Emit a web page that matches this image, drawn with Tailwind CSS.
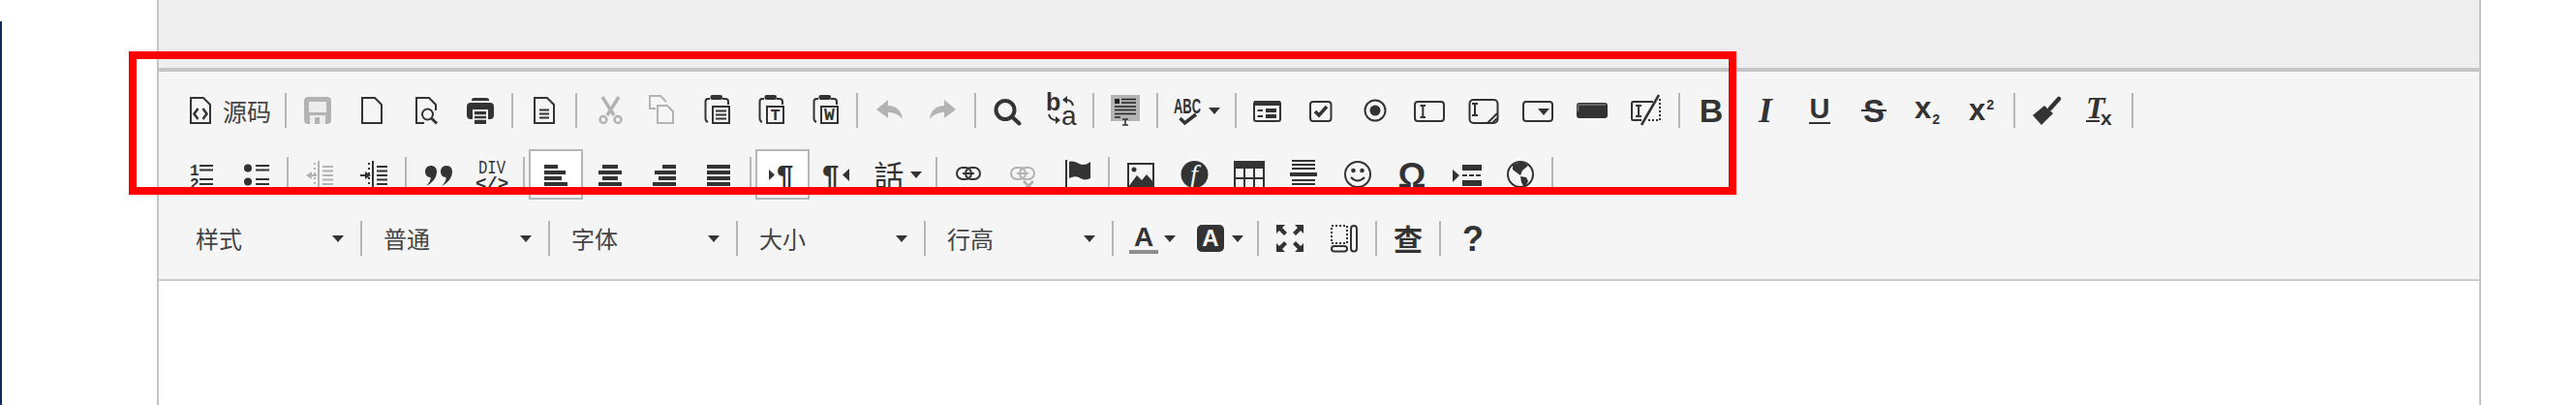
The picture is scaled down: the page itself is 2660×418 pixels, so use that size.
<!DOCTYPE html>
<html lang="zh">
<head>
<meta charset="utf-8">
<title>Editor toolbar</title>
<script src="https://cdn.jsdelivr.net/npm/@tailwindcss/browser@4"></script>
</head>
<body class="bg-white">
<div class="relative w-[2660px] h-[418px] overflow-hidden bg-white font-['Noto_Sans_CJK_SC','Noto_Sans',sans-serif] text-[24px] text-[#444]">
  <div class="absolute left-0 top-[22px] bottom-0 w-[2px] bg-[#0f2a5c]"></div>

  <div class="ml-[162px] w-[2400px] h-[418px] border-x-2 border-[#c4c4c4]">
    <div class="h-[74px] bg-[#eeeeee] border-b-4 border-[#c4c4c4]"></div>
    <div class="h-[216px] bg-[#f5f5f5] border-b-2 border-[#cccccc] pt-[7px]">

      <!-- ROW 1 -->
      <div class="flex items-center h-[66px] pl-[15px]">
        <div class="w-[111px] flex items-center pl-[14px]">
          <svg class="overflow-visible shrink-0" width="28" height="28" viewBox="0 0 28 28"><path d="M4 1H17L24 8V27H4Z" fill="none" stroke="#333" stroke-width="2"/><path d="M11.5 12L7.5 17.5L11.5 23M16.5 12L20.5 17.5L16.5 23" fill="none" stroke="#333" stroke-width="2.5"/></svg>
          <span class="ml-[9px] leading-none text-[25px]">源码</span>
        </div>
        <div class="w-[2px] h-[36px] mx-[4px] bg-[#b6b6b6]"></div>
        <!-- save -->
        <div class="w-[56px] flex justify-center"><svg class="overflow-visible" width="28" height="28" viewBox="0 0 28 28"><rect width="28" height="28" rx="4" fill="#b3b3b3"/><rect x="5" y="5" width="18" height="11" fill="#ededed"/><rect x="6" y="19" width="16" height="9" fill="#ededed"/><rect x="11" y="21" width="5" height="7" fill="#b3b3b3"/></svg></div>
        <!-- new -->
        <div class="w-[56px] flex justify-center"><svg class="overflow-visible" width="28" height="28" viewBox="0 0 28 28"><path d="M4 1H17L24 8V27H4Z" fill="none" stroke="#333" stroke-width="2"/></svg></div>
        <!-- preview -->
        <div class="w-[56px] flex justify-center"><svg class="overflow-visible" width="28" height="28" viewBox="0 0 28 28"><path d="M12 27H4V1H17L24 8V14" fill="none" stroke="#333" stroke-width="2"/><circle cx="15.5" cy="18" r="5.5" fill="none" stroke="#333" stroke-width="2"/><path d="M19.5 22L25 27.5" stroke="#333" stroke-width="3"/></svg></div>
        <!-- print -->
        <div class="w-[56px] flex justify-center"><svg class="overflow-visible" width="28" height="28" viewBox="0 0 28 28"><path d="M5 4V3Q5 1 8 1H20Q23 1 23 3V4Z" fill="#333"/><rect y="6" width="28" height="17" rx="4" fill="#333"/><rect x="6" y="13" width="16" height="15" fill="#f5f5f5"/><rect x="8" y="15" width="12" height="13" fill="#333"/><path d="M8 19H20M8 23H20" stroke="#f5f5f5" stroke-width="1.5"/></svg></div>
        <div class="w-[2px] h-[36px] mx-[4px] bg-[#b6b6b6]"></div>
        <!-- templates -->
        <div class="w-[56px] flex justify-center"><svg class="overflow-visible" width="28" height="28" viewBox="0 0 28 28"><path d="M4 1H17L24 8V27H4Z" fill="none" stroke="#333" stroke-width="2"/><path d="M9 13.5H19M9 17.5H19M9 21.5H19" stroke="#333" stroke-width="2"/></svg></div>
        <div class="w-[2px] h-[36px] mx-[4px] bg-[#b6b6b6]"></div>
        <!-- cut -->
        <div class="w-[56px] flex justify-center"><svg class="overflow-visible" width="28" height="28" viewBox="0 0 28 28"><path d="M8 0L20 19M25 0L13 19" stroke="#b3b3b3" stroke-width="3.5" fill="none"/><circle cx="9" cy="23.5" r="3.5" fill="none" stroke="#b3b3b3" stroke-width="2.5"/><circle cx="24" cy="23.5" r="3.5" fill="none" stroke="#b3b3b3" stroke-width="2.5"/></svg></div>
        <!-- copy -->
        <div class="w-[56px] flex justify-center"><svg class="overflow-visible" width="28" height="28" viewBox="0 0 28 28"><path d="M7 12H1V-1H12L18 5" fill="none" stroke="#b3b3b3" stroke-width="2"/><path d="M9 9H19L25 15V27H9Z" fill="none" stroke="#b3b3b3" stroke-width="2"/></svg></div>
        <!-- paste -->
        <div class="w-[56px] flex justify-center"><svg class="overflow-visible" width="28" height="28" viewBox="0 0 28 28"><g transform="translate(1 0)"><rect x="6.5" y="-2" width="12.5" height="5" rx="2" fill="#333"/><path d="M6 2H4Q1.5 2 1.5 5V22Q1.5 25 4 26M19 2H22Q25 2 25 5V8" fill="none" stroke="#333" stroke-width="2"/><rect x="9" y="10" width="17" height="17" fill="none" stroke="#333" stroke-width="2"/><path d="M12 14.5H23M12 18.5H23M12 22.5H23" stroke="#333" stroke-width="2"/></g></svg></div>
        <!-- paste text -->
        <div class="w-[56px] flex justify-center"><svg class="overflow-visible" width="28" height="28" viewBox="0 0 28 28"><g transform="translate(1 0)"><rect x="6.5" y="-2" width="12.5" height="5" rx="2" fill="#333"/><path d="M6 2H4Q1.5 2 1.5 5V22Q1.5 25 4 26M19 2H22Q25 2 25 5V8" fill="none" stroke="#333" stroke-width="2"/><rect x="9" y="10" width="17" height="17" fill="none" stroke="#333" stroke-width="2"/><text x="17.5" y="24" text-anchor="middle" font-family="Liberation Mono" font-weight="bold" font-size="17" fill="#333">T</text></g></svg></div>
        <!-- paste word -->
        <div class="w-[56px] flex justify-center"><svg class="overflow-visible" width="28" height="28" viewBox="0 0 28 28"><g transform="translate(1 0)"><rect x="6.5" y="-2" width="12.5" height="5" rx="2" fill="#333"/><path d="M6 2H4Q1.5 2 1.5 5V22Q1.5 25 4 26M19 2H22Q25 2 25 5V8" fill="none" stroke="#333" stroke-width="2"/><rect x="9" y="10" width="17" height="17" fill="none" stroke="#333" stroke-width="2"/><text x="17.5" y="24" text-anchor="middle" font-family="Liberation Mono" font-weight="bold" font-size="18" fill="#333">W</text></g></svg></div>
        <div class="w-[2px] h-[36px] mx-[4px] bg-[#b6b6b6]"></div>
        <!-- undo / redo -->
        <div class="w-[56px] flex justify-center"><svg class="overflow-visible" width="28" height="28" viewBox="0 0 28 28"><path d="M1 13L13 3V9C21 9 27 14 28 23C24 18 19 16 13 16V22Z" fill="#b3b3b3"/></svg></div>
        <div class="w-[56px] flex justify-center"><svg class="overflow-visible" width="28" height="28" viewBox="0 0 28 28"><path d="M27 13L15 3V9C7 9 1 14 0 23C4 18 9 16 15 16V22Z" fill="#b3b3b3"/></svg></div>
        <div class="w-[2px] h-[36px] mx-[4px] bg-[#b6b6b6]"></div>
        <!-- find -->
        <div class="w-[56px] flex justify-center"><svg class="overflow-visible" width="28" height="28" viewBox="0 0 28 28"><circle cx="12" cy="13.5" r="9.5" fill="none" stroke="#333" stroke-width="4"/><path d="M19.5 21L26.5 27.5" stroke="#333" stroke-width="4" stroke-linecap="round"/></svg></div>
        <!-- replace -->
        <div class="w-[56px] flex justify-center"><svg class="overflow-visible" width="28" height="28" viewBox="0 0 28 28"><text x="-2" y="14" font-family="Liberation Sans" font-size="25" fill="#333" font-weight="bold">b</text><text x="14" y="29" font-family="Liberation Sans" font-size="28" fill="#333">a</text><path d="M26 9C25 4 22 3 18 3" fill="none" stroke="#333" stroke-width="2"/><path d="M15 3L20 -1V7Z" fill="#333"/><path d="M1 18C2 22 5 24 9 24" fill="none" stroke="#333" stroke-width="2"/><path d="M13 24L8 20V28Z" fill="#333"/></svg></div>
        <div class="w-[2px] h-[36px] mx-[4px] bg-[#b6b6b6]"></div>
        <!-- select all -->
        <div class="w-[56px] flex justify-center"><svg class="overflow-visible" width="28" height="28" viewBox="0 0 28 28"><rect x="-1" y="-2" width="30" height="27" fill="#b3b3b3"/><rect x="3" y="2" width="5" height="5" fill="#222"/><path d="M10 2.5H25M10 6H25M3 10H25M3 13.5H25M3 17.5H25M3 21H9" stroke="#222" stroke-width="1.6"/><path d="M11 23H17M14 23V29M11 29H17" stroke="#333" stroke-width="1.6" fill="none"/></svg></div>
        <div class="w-[2px] h-[36px] mx-[4px] bg-[#b6b6b6]"></div>
        <!-- spell -->
        <div class="w-[71px] flex items-center pl-[12px]"><svg class="overflow-visible shrink-0" width="28" height="28" viewBox="0 0 28 28"><text x="0" y="17" font-family="Liberation Sans" font-weight="bold" font-size="22" textLength="28" lengthAdjust="spacingAndGlyphs" fill="#333">ABC</text><path d="M6.5 22L11.5 27L23 18" fill="none" stroke="#333" stroke-width="3.5"/></svg><svg class="ml-[8px] shrink-0" width="12" height="7" viewBox="0 0 12 7"><path d="M0 0H12L6 7Z" fill="#333"/></svg></div>
        <div class="w-[2px] h-[36px] mx-[4px] bg-[#b6b6b6]"></div>
        <!-- form -->
        <div class="w-[56px] flex justify-center"><svg class="overflow-visible" width="28" height="28" viewBox="0 0 28 28"><rect x="0" y="5" width="27" height="20" rx="2" fill="none" stroke="#333" stroke-width="2"/><rect x="0" y="4" width="27" height="5" fill="#333"/><path d="M3.5 14H9M3.5 20H9" stroke="#333" stroke-width="2"/><rect x="12" y="12" width="11" height="4" fill="#333"/><rect x="12" y="18" width="11" height="4" fill="#333"/></svg></div>
        <!-- checkbox -->
        <div class="w-[56px] flex justify-center"><svg class="overflow-visible" width="28" height="28" viewBox="0 0 28 28"><rect x="2" y="5" width="21.5" height="20" rx="3" fill="none" stroke="#333" stroke-width="2"/><path d="M7 15L11 19L19 10" fill="none" stroke="#333" stroke-width="3.5"/></svg></div>
        <!-- radio -->
        <div class="w-[56px] flex justify-center"><svg class="overflow-visible" width="28" height="28" viewBox="0 0 28 28"><circle cx="13" cy="14" r="10.5" fill="none" stroke="#333" stroke-width="2"/><circle cx="13" cy="14" r="5.5" fill="#333"/></svg></div>
        <!-- text field -->
        <div class="w-[56px] flex justify-center"><svg class="overflow-visible" width="28" height="28" viewBox="0 0 28 28"><rect x="-2" y="5" width="30" height="20" rx="3" fill="none" stroke="#333" stroke-width="2"/><path d="M3.5 9H9M6.3 9V21M3.5 21H9" fill="none" stroke="#333" stroke-width="2"/></svg></div>
        <!-- textarea -->
        <div class="w-[56px] flex justify-center"><svg class="overflow-visible" width="28" height="28" viewBox="0 0 28 28"><rect x="-1.5" y="3" width="29" height="24" rx="4" fill="none" stroke="#333" stroke-width="2"/><path d="M1 7H7M4 7V19M1 19H7" fill="none" stroke="#333" stroke-width="2"/><path d="M17 27L27 17M22 27L27 22" stroke="#333" stroke-width="2"/></svg></div>
        <!-- select -->
        <div class="w-[56px] flex justify-center"><svg class="overflow-visible" width="28" height="28" viewBox="0 0 28 28"><rect x="-2" y="5" width="30" height="20" rx="3" fill="none" stroke="#333" stroke-width="2"/><path d="M13 12H25L19 19Z" fill="#333"/></svg></div>
        <!-- button -->
        <div class="w-[56px] flex justify-center"><svg class="overflow-visible" width="28" height="28" viewBox="0 0 28 28"><rect x="-3" y="6" width="32" height="16" rx="3" fill="#333"/><path d="M-1.5 15V9.5Q-1.5 8 0 8H27" fill="none" stroke="#777" stroke-width="1.5"/></svg></div>
        <!-- hidden -->
        <div class="w-[56px] flex justify-center"><svg class="overflow-visible" width="28" height="28" viewBox="0 0 28 28"><path d="M20 5H-1Q-2 5 -2 7V22Q-2 24 -1 24H8" fill="none" stroke="#333" stroke-width="2"/><path d="M15 24H27V2" fill="none" stroke="#333" stroke-width="2" stroke-dasharray="2 2"/><path d="M26 -2L8 29" stroke="#333" stroke-width="2.5"/><path d="M2 9H8M5 9V20M2 20H8" fill="none" stroke="#333" stroke-width="2"/></svg></div>
        <div class="w-[2px] h-[36px] mx-[4px] bg-[#b6b6b6]"></div>
        <!-- B I U S sub sup -->
        <div class="w-[56px] flex justify-center"><svg class="overflow-visible" width="28" height="28" viewBox="0 0 28 28"><text x="14" y="26" text-anchor="middle" font-family="Liberation Sans" font-weight="bold" font-size="34" fill="#333">B</text></svg></div>
        <div class="w-[56px] flex justify-center"><svg class="overflow-visible" width="28" height="28" viewBox="0 0 28 28"><text x="14" y="26" text-anchor="middle" font-family="Liberation Serif" font-weight="bold" font-style="italic" font-size="36" fill="#333">I</text></svg></div>
        <div class="w-[56px] flex justify-center"><svg class="overflow-visible" width="28" height="28" viewBox="0 0 28 28"><text x="14" y="22" text-anchor="middle" font-family="Liberation Sans" font-weight="bold" font-size="29" fill="#333">U</text><path d="M3 27H25" stroke="#333" stroke-width="2"/></svg></div>
        <div class="w-[56px] flex justify-center"><svg class="overflow-visible" width="28" height="28" viewBox="0 0 28 28"><text x="14" y="25.5" text-anchor="middle" font-family="Liberation Sans" font-weight="bold" font-size="33" fill="#333">S</text><path d="M1 14H27" stroke="#333" stroke-width="2"/></svg></div>
        <div class="w-[56px] flex justify-center"><svg class="overflow-visible" width="28" height="28" viewBox="0 0 28 28"><text x="0" y="22" font-family="Liberation Sans" font-weight="bold" font-size="31" fill="#333">x</text><text x="18" y="28" font-family="Liberation Mono" font-weight="bold" font-size="14" fill="#333">2</text></svg></div>
        <div class="w-[56px] flex justify-center"><svg class="overflow-visible" width="28" height="28" viewBox="0 0 28 28"><text x="0" y="24" font-family="Liberation Sans" font-weight="bold" font-size="31" fill="#333">x</text><text x="18" y="13" font-family="Liberation Mono" font-weight="bold" font-size="14" fill="#333">2</text></svg></div>
        <div class="w-[2px] h-[36px] mx-[4px] bg-[#b6b6b6]"></div>
        <!-- brush -->
        <div class="w-[56px] flex justify-center"><svg class="overflow-visible" width="28" height="28" viewBox="0 0 28 28"><path d="M27 2L18 12" stroke="#333" stroke-width="4.5" stroke-linecap="round"/><path d="M12 9L21 17L9 29L0 19Z" fill="#333"/></svg></div>
        <!-- remove format -->
        <div class="w-[56px] flex justify-center"><svg class="overflow-visible" width="28" height="28" viewBox="0 0 28 28"><text x="-1" y="22" font-family="Liberation Serif" font-weight="bold" font-style="italic" font-size="32" fill="#333">T</text><path d="M-1 25H13" stroke="#333" stroke-width="2"/><text x="14" y="29" font-family="Liberation Sans" font-weight="bold" font-size="21" fill="#333">x</text></svg></div>
        <div class="w-[2px] h-[36px] mx-[4px] bg-[#b6b6b6]"></div>
      </div>

      <!-- ROW 2 -->
      <div class="flex items-center h-[66px] pl-[16px]">
        <div class="w-[56px] flex justify-center"><svg class="overflow-visible" width="28" height="28" viewBox="0 0 28 28"><text x="2" y="15" font-family="Liberation Mono" font-weight="bold" font-size="16" fill="#333">1</text><text x="2" y="29" font-family="Liberation Mono" font-weight="bold" font-size="16" fill="#333">2</text><path d="M12 5H26M12 9.5H26M12 19H26M12 24H26" stroke="#333" stroke-width="2"/></svg></div>
        <div class="w-[56px] flex justify-center"><svg class="overflow-visible" width="28" height="28" viewBox="0 0 28 28"><circle cx="6" cy="7.5" r="4" fill="#333"/><circle cx="6" cy="21.5" r="4" fill="#333"/><path d="M14 5H28M14 9.5H28M14 19H28M14 24H28" stroke="#333" stroke-width="2"/></svg></div>
        <div class="w-[2px] h-[36px] mx-[4px] bg-[#b6b6b6]"></div>
        <div class="w-[56px] flex justify-center"><svg class="overflow-visible" width="28" height="28" viewBox="0 0 28 28"><path d="M13 0V28" stroke="#b3b3b3" stroke-width="2"/><path d="M9 2V27" stroke="#b3b3b3" stroke-width="2" stroke-dasharray="2 3"/><path d="M17 6H28M17 10.5H28M17 15H28M17 19.5H28M17 24H28" stroke="#b3b3b3" stroke-width="2"/><path d="M5 15H11" stroke="#b3b3b3" stroke-width="2"/><path d="M0 15L6 11V19Z" fill="#b3b3b3"/></svg></div>
        <div class="w-[56px] flex justify-center"><svg class="overflow-visible" width="28" height="28" viewBox="0 0 28 28"><path d="M13 0V28" stroke="#333" stroke-width="2"/><path d="M9 2V27" stroke="#333" stroke-width="2" stroke-dasharray="2 3"/><path d="M17 6H28M17 10.5H28M17 15H28M17 19.5H28M17 24H28" stroke="#333" stroke-width="2"/><path d="M0 15H6" stroke="#333" stroke-width="2"/><path d="M11 15L5 11V19Z" fill="#333"/></svg></div>
        <div class="w-[2px] h-[36px] mx-[4px] bg-[#b6b6b6]"></div>
        <div class="w-[56px] flex justify-center"><svg class="overflow-visible" width="28" height="28" viewBox="0 0 28 28"><path d="M7 5C11 5 13 8 13 11C13 18 8 23 2 26C6 22 7 19 6.5 17C3 17 1 14 1 11C1 8 3 5 7 5Z" fill="#333"/><path d="M23 5C27 5 29 8 29 11C29 18 24 23 18 26C22 22 23 19 22.5 17C19 17 17 14 17 11C17 8 19 5 23 5Z" fill="#333"/></svg></div>
        <div class="w-[56px] flex justify-center"><svg class="overflow-visible" width="28" height="28" viewBox="0 0 28 28"><text x="0" y="13" font-family="Liberation Mono" font-size="21" textLength="28" lengthAdjust="spacingAndGlyphs" fill="#333">DIV</text><text x="14" y="29" text-anchor="middle" font-family="Liberation Mono" font-weight="bold" font-size="19" fill="#333">&lt;/&gt;</text></svg></div>
        <div class="w-[2px] h-[36px] mx-[4px] bg-[#b6b6b6]"></div>
        <!-- align, left active -->
        <div class="w-[56px] h-[52px] flex items-center justify-center border-2 border-[#b6b6b6] bg-white"><svg class="overflow-visible" width="28" height="28" viewBox="0 0 28 28"><path d="M2 6H16M2 12H24M2 18H20M2 24H26" stroke="#333" stroke-width="4"/></svg></div>
        <div class="w-[56px] flex justify-center"><svg class="overflow-visible" width="28" height="28" viewBox="0 0 28 28"><path d="M6 6H22M2 12H26M6 18H22M2 24H26" stroke="#333" stroke-width="4"/></svg></div>
        <div class="w-[56px] flex justify-center"><svg class="overflow-visible" width="28" height="28" viewBox="0 0 28 28"><path d="M12 6H26M4 12H26M8 18H26M2 24H26" stroke="#333" stroke-width="4"/></svg></div>
        <div class="w-[56px] flex justify-center"><svg class="overflow-visible" width="28" height="28" viewBox="0 0 28 28"><path d="M2 6H26M2 12H26M2 18H26M2 24H26" stroke="#333" stroke-width="4"/></svg></div>
        <div class="w-[2px] h-[36px] mx-[4px] bg-[#b6b6b6]"></div>
        <!-- ltr active / rtl -->
        <div class="w-[56px] h-[52px] flex items-center justify-center border-2 border-[#b6b6b6] bg-white"><svg class="overflow-visible" width="28" height="28" viewBox="0 0 28 28"><path d="M0 9L6 14.5L0 20Z" fill="#333"/><text x="8" y="27" font-family="Liberation Sans" font-weight="bold" font-size="31" fill="#333">¶</text></svg></div>
        <div class="w-[56px] flex justify-center"><svg class="overflow-visible" width="28" height="28" viewBox="0 0 28 28"><text x="-1" y="27" font-family="Liberation Sans" font-weight="bold" font-size="31" fill="#333">¶</text><path d="M27 8L20 14.5L27 21Z" fill="#333"/></svg></div>
        <!-- language -->
        <div class="w-[70px] flex items-center pl-[12px]"><svg class="overflow-visible shrink-0" width="28" height="28" viewBox="0 0 28 28"><text x="14" y="27" text-anchor="middle" font-family="Noto Sans CJK TC" font-size="31" fill="#333">話</text></svg><svg class="ml-[8px] shrink-0" width="12" height="7" viewBox="0 0 12 7"><path d="M0 0H12L6 7Z" fill="#333"/></svg></div>
        <div class="w-[2px] h-[36px] mx-[4px] bg-[#b6b6b6]"></div>
        <!-- link -->
        <div class="w-[56px] flex justify-center"><svg class="overflow-visible" width="28" height="28" viewBox="0 0 28 28"><rect x="2" y="7" width="15" height="12" rx="6" fill="none" stroke="#333" stroke-width="2"/><rect x="11" y="7" width="15" height="12" rx="6" fill="none" stroke="#333" stroke-width="2"/><path d="M8 13H20" stroke="#333" stroke-width="2"/></svg></div>
        <div class="w-[56px] flex justify-center"><svg class="overflow-visible" width="28" height="28" viewBox="0 0 28 28"><rect x="2" y="7" width="15" height="12" rx="6" fill="none" stroke="#b3b3b3" stroke-width="2"/><rect x="11" y="7" width="15" height="12" rx="6" fill="none" stroke="#b3b3b3" stroke-width="2"/><path d="M8 13H20" stroke="#b3b3b3" stroke-width="2"/><path d="M15 21L25 31M25 21L15 31" stroke="#b3b3b3" stroke-width="3"/></svg></div>
        <!-- anchor -->
        <div class="w-[56px] flex justify-center"><svg class="overflow-visible" width="28" height="28" viewBox="0 0 28 28"><path d="M3 -1V28" stroke="#333" stroke-width="2"/><path d="M6 1C12 -1 16 4 20 4C24 4 26 2 28 1V18C24 20 20 20 16 17C12 15 8 17 6 18Z" fill="#333"/></svg></div>
        <div class="w-[2px] h-[36px] mx-[4px] bg-[#b6b6b6]"></div>
        <!-- image -->
        <div class="w-[56px] flex justify-center"><svg class="overflow-visible" width="28" height="28" viewBox="0 0 28 28"><rect x="1" y="3" width="26" height="24" fill="none" stroke="#333" stroke-width="2"/><circle cx="7" cy="9" r="2.5" fill="#333"/><path d="M1 27L10 15L15 20L20 14L27 22V27Z" fill="#333"/></svg></div>
        <!-- flash -->
        <div class="w-[56px] flex justify-center"><svg class="overflow-visible" width="28" height="28" viewBox="0 0 28 28"><circle cx="13.5" cy="14" r="14" fill="#333"/><text x="13" y="23" text-anchor="middle" font-family="Liberation Serif" font-style="italic" font-size="28" fill="#f5f5f5">f</text></svg></div>
        <!-- table -->
        <div class="w-[56px] flex justify-center"><svg class="overflow-visible" width="28" height="28" viewBox="0 0 28 28"><rect x="-1" y="1" width="30" height="28" fill="none" stroke="#333" stroke-width="2"/><rect x="-2" y="0" width="32" height="8" fill="#333"/><path d="M9 8V29M19 8V29M-1 18H29" stroke="#333" stroke-width="2"/></svg></div>
        <!-- hr -->
        <div class="w-[56px] flex justify-center"><svg class="overflow-visible" width="28" height="28" viewBox="0 0 28 28"><path d="M2 0H26M2 4H26M2 8H26M2 20H26M2 24H26M2 28H26" stroke="#333" stroke-width="1.8"/><rect x="0" y="12" width="28" height="4" fill="#333"/></svg></div>
        <!-- smiley -->
        <div class="w-[56px] flex justify-center"><svg class="overflow-visible" width="28" height="28" viewBox="0 0 28 28"><circle cx="14" cy="14" r="13" fill="none" stroke="#333" stroke-width="2"/><circle cx="9.5" cy="10" r="2.3" fill="#333"/><circle cx="18.5" cy="10" r="2.3" fill="#333"/><path d="M7 17Q14 24 21 17" fill="none" stroke="#333" stroke-width="2"/></svg></div>
        <!-- omega -->
        <div class="w-[56px] flex justify-center"><svg class="overflow-visible" width="28" height="28" viewBox="0 0 28 28"><text x="14" y="28" text-anchor="middle" font-family="Liberation Sans" font-weight="bold" font-size="36" fill="#333">Ω</text></svg></div>
        <!-- page break -->
        <div class="w-[56px] flex justify-center"><svg class="overflow-visible" width="28" height="28" viewBox="0 0 28 28"><path d="M0 9L7 15L0 22Z" fill="#333"/><rect x="10" y="4" width="20" height="6" fill="#333"/><rect x="10" y="20" width="20" height="6" fill="#333"/><path d="M10 15H30" stroke="#333" stroke-width="2" stroke-dasharray="5 2"/></svg></div>
        <!-- iframe -->
        <div class="w-[56px] flex justify-center"><svg class="overflow-visible" width="28" height="28" viewBox="0 0 28 28"><circle cx="14" cy="14" r="13" fill="none" stroke="#333" stroke-width="2"/><path d="M6 4L16 1L22 5L16 10L14 15L10 12L6 9Z" fill="#333"/><path d="M14 16L20 17L22 21L18 28L15 22Z" fill="#333"/></svg></div>
        <div class="w-[2px] h-[36px] mx-[4px] bg-[#b6b6b6]"></div>
      </div>

      <!-- ROW 3 -->
      <div class="flex items-center h-[66px] pl-[20px]">
        <div class="w-[184px] flex items-center justify-between pl-[18px] pr-[13px]"><span class="leading-none">样式</span><svg width="12" height="7" viewBox="0 0 12 7"><path d="M0 0H12L6 7Z" fill="#333"/></svg></div>
        <div class="w-[2px] h-[36px] mx-[4px] bg-[#b6b6b6]"></div>
        <div class="w-[184px] flex items-center justify-between pl-[18px] pr-[13px]"><span class="leading-none">普通</span><svg width="12" height="7" viewBox="0 0 12 7"><path d="M0 0H12L6 7Z" fill="#333"/></svg></div>
        <div class="w-[2px] h-[36px] mx-[4px] bg-[#b6b6b6]"></div>
        <div class="w-[184px] flex items-center justify-between pl-[18px] pr-[13px]"><span class="leading-none">字体</span><svg width="12" height="7" viewBox="0 0 12 7"><path d="M0 0H12L6 7Z" fill="#333"/></svg></div>
        <div class="w-[2px] h-[36px] mx-[4px] bg-[#b6b6b6]"></div>
        <div class="w-[184px] flex items-center justify-between pl-[18px] pr-[13px]"><span class="leading-none">大小</span><svg width="12" height="7" viewBox="0 0 12 7"><path d="M0 0H12L6 7Z" fill="#333"/></svg></div>
        <div class="w-[2px] h-[36px] mx-[4px] bg-[#b6b6b6]"></div>
        <div class="w-[184px] flex items-center justify-between pl-[18px] pr-[13px]"><span class="leading-none">行高</span><svg width="12" height="7" viewBox="0 0 12 7"><path d="M0 0H12L6 7Z" fill="#333"/></svg></div>
        <div class="w-[2px] h-[36px] mx-[4px] bg-[#b6b6b6]"></div>
        <!-- text color -->
        <div class="w-[72px] flex items-center pl-[13px]"><svg class="overflow-visible shrink-0" width="28" height="28" viewBox="0 0 28 28"><text x="14" y="22" text-anchor="middle" font-family="Liberation Sans" font-weight="bold" font-size="28" fill="#333">A</text><rect x="-1" y="26" width="30" height="4" fill="#8c8c8c"/></svg><svg class="ml-[7px] shrink-0" width="12" height="7" viewBox="0 0 12 7"><path d="M0 0H12L6 7Z" fill="#333"/></svg></div>
        <!-- bg color -->
        <div class="w-[68px] flex items-center pl-[10px]"><svg class="overflow-visible shrink-0" width="28" height="28" viewBox="0 0 28 28"><rect width="28" height="28" rx="5" fill="#333"/><text x="14" y="22" text-anchor="middle" font-family="Liberation Sans" font-weight="bold" font-size="24" fill="#f5f5f5">A</text></svg><svg class="ml-[8px] shrink-0" width="12" height="7" viewBox="0 0 12 7"><path d="M0 0H12L6 7Z" fill="#333"/></svg></div>
        <div class="w-[2px] h-[36px] mx-[4px] bg-[#b6b6b6]"></div>
        <!-- maximize -->
        <div class="w-[56px] flex justify-center"><svg class="overflow-visible" width="28" height="28" viewBox="0 0 28 28"><path d="M0 0H9L6 3L11 8L8 11L3 6L0 9Z" fill="#333"/><path d="M28 0H19L22 3L17 8L20 11L25 6L28 9Z" fill="#333"/><path d="M0 28H9L6 25L11 20L8 17L3 22L0 19Z" fill="#333"/><path d="M28 28H19L22 25L17 20L20 17L25 22L28 19Z" fill="#333"/></svg></div>
        <!-- show blocks -->
        <div class="w-[56px] flex justify-center"><svg class="overflow-visible" width="28" height="28" viewBox="0 0 28 28"><rect x="1" y="1" width="16" height="18" fill="none" stroke="#333" stroke-width="2" stroke-dasharray="2 2"/><rect x="1" y="22" width="16" height="5.5" rx="2.75" fill="none" stroke="#333" stroke-width="2"/><rect x="21" y="1" width="6" height="26.5" rx="3" fill="none" stroke="#333" stroke-width="2"/></svg></div>
        <div class="w-[2px] h-[36px] mx-[4px] bg-[#b6b6b6]"></div>
        <!-- 查 -->
        <div class="w-[56px] flex justify-center"><svg class="overflow-visible" width="28" height="28" viewBox="0 0 28 28"><text x="14" y="26" text-anchor="middle" font-family="Noto Sans CJK SC" font-weight="bold" font-size="30" fill="#333">查</text></svg></div>
        <div class="w-[2px] h-[36px] mx-[4px] bg-[#b6b6b6]"></div>
        <div class="w-[56px] flex justify-center"><svg class="overflow-visible" width="28" height="28" viewBox="0 0 28 28"><text x="15" y="27" text-anchor="middle" font-family="Liberation Sans" font-weight="bold" font-size="36" fill="#333">?</text></svg></div>
      </div>
    </div>
  </div>

  <!-- red annotation rectangle -->
  <div class="absolute left-[133px] top-[53px] w-[1660px] h-[148px] border-8 border-[#ff0000]"></div>
</div>
</body>
</html>
